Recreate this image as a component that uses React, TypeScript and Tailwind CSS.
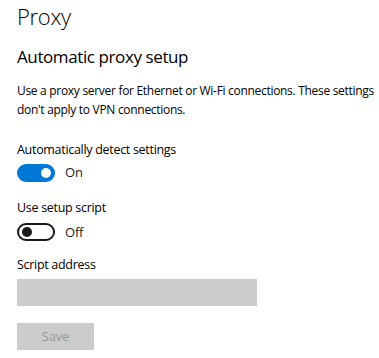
import React from "react";

function Toggle({ on }: { on: boolean }) {
  return (
    <div className="flex items-center gap-[10px]">
      {on ? (
        <div className="w-[38px] h-[18px] rounded-full bg-[#0078d7] flex items-center justify-end pr-[4px]">
          <div className="w-[10px] h-[10px] rounded-full bg-white" />
        </div>
      ) : (
        <div className="w-[38px] h-[18px] rounded-full border-2 border-[#1a1a1a] flex items-center pl-[3px]">
          <div className="w-[10px] h-[10px] rounded-full bg-[#1a1a1a]" />
        </div>
      )}
      <span className="text-[13px] tracking-[-0.2px] text-[#1a1a1a]">{on ? "On" : "Off"}</span>
    </div>
  );
}

export default function App() {
  return (
    <div className="w-[379px] h-[358px] bg-white pl-[17px] font-['Open_Sans',sans-serif] text-[#000] overflow-hidden">
      <h1 className="text-[22px] font-light leading-[32px] tracking-[-0.3px]">Proxy</h1>

      <h2 className="mt-[13px] text-[17px] leading-[24px] tracking-[-0.4px]">Automatic proxy setup</h2>

      <p className="mt-[12px] text-[12px] leading-[19px] w-[362px] tracking-[-0.3px]">
        Use a proxy server for Ethernet or Wi-Fi connections. These settings don't apply to VPN connections.
      </p>

      <div className="mt-[22px] text-[12.5px] leading-[18px] tracking-[-0.3px]">Automatically detect settings</div>
      <div className="mt-[4px]">
        <Toggle on />
      </div>

      <div className="mt-[16px] text-[12.5px] leading-[18px] tracking-[-0.3px]">Use setup script</div>
      <div className="mt-[6px]">
        <Toggle on={false} />
      </div>

      <div className="mt-[14px] text-[12.5px] leading-[18px] tracking-[-0.3px]">Script address</div>
      <div className="mt-[5px] w-[240px] h-[27px] bg-[#cccccc]" />

      <button className="mt-[17px] w-[77px] h-[27px] bg-[#cccccc] text-[13px] tracking-[-0.2px] text-[#999999] block">
        Save
      </button>
    </div>
  );
}
